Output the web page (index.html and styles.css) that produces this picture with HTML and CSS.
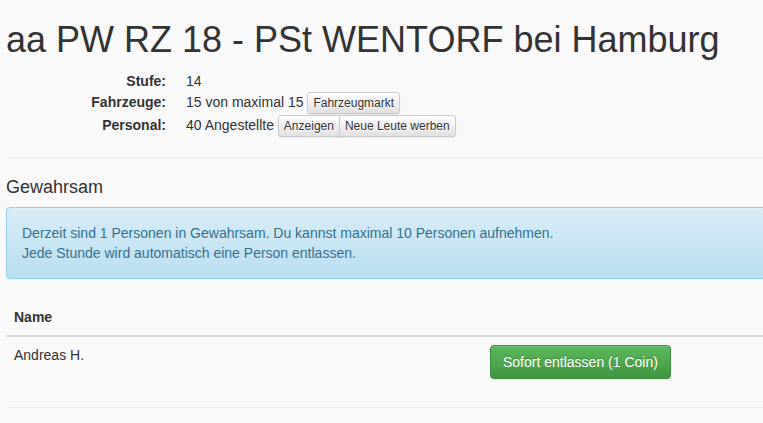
FILE: index.html
```html
<!DOCTYPE html>
<html lang="de">
<head>
<meta charset="utf-8">
<title>aa PW RZ 18 - PSt WENTORF bei Hamburg</title>
<link rel="stylesheet" href="styles.css">
</head>
<body>
<div class="page">
  <h1 class="title">aa PW RZ 18 - PSt WENTORF bei Hamburg</h1>
  <dl class="info">
    <dt>Stufe:</dt>
    <dd>14</dd>
    <dt class="tall">Fahrzeuge:</dt>
    <dd class="tall">15 von maximal 15 <a class="btn btn-xs">Fahrzeugmarkt</a></dd>
    <dt class="tall">Personal:</dt>
    <dd class="tall">40 Angestellte <span class="btn-group"><a class="btn btn-xs">Anzeigen</a><a class="btn btn-xs">Neue Leute werben</a></span></dd>
  </dl>
  <hr class="rule">
  <h4 class="section-title">Gewahrsam</h4>
  <div class="alert-info">
    Derzeit sind 1 Personen in Gewahrsam. Du kannst maximal 10 Personen aufnehmen.<br>
    Jede Stunde wird automatisch eine Person entlassen.
  </div>
  <table class="table">
    <thead>
      <tr><th class="col-name">Name</th><th></th></tr>
    </thead>
    <tbody>
      <tr>
        <td>Andreas H.</td>
        <td><a class="btn btn-success">Sofort entlassen (1 Coin)</a></td>
      </tr>
    </tbody>
  </table>
  <hr class="rule">
</div>
</body>
</html>
```

FILE: styles.css
```css
html, body {
  margin: 0;
  padding: 0;
  overflow: hidden;
}
body {
  background: #f9f9f9;
  color: #333;
  font-family: "Liberation Sans", Arial, Helvetica, sans-serif;
  font-size: 14px;
  line-height: 20px;
}
.page {
  width: 1000px;
  padding: 0 6px;
}
.title {
  font-size: 36px;
  font-weight: normal;
  line-height: 1.1;
  margin: 20px 0 11px;
}
.info {
  margin: 0 0 20px;
}
.info dt {
  float: left;
  clear: left;
  width: 160px;
  text-align: right;
  font-weight: bold;
}
.info dd {
  margin: 0 0 0 180px;
}
.info .tall {
  line-height: 22px;
}
.btn {
  display: inline-block;
  box-sizing: border-box;
  cursor: pointer;
  text-align: center;
  vertical-align: middle;
  white-space: nowrap;
  border: 1px solid #ccc;
  border-radius: 4px;
  color: #333;
  text-decoration: none;
  padding: 6px 12px;
  font-size: 14px;
  line-height: 20px;
}
.btn-xs {
  padding: 1px 5px;
  font-size: 12px;
  line-height: 18px;
  border-radius: 3px;
  background-image: linear-gradient(to bottom, #fff 0, #e0e0e0 100%);
  border-color: #ccc;
  text-shadow: 0 1px 0 #fff;
  box-shadow: inset 0 1px 0 rgba(255,255,255,.15), 0 1px 1px rgba(0,0,0,.075);
}
.btn-group {
  display: inline-flex;
  vertical-align: middle;
}
.btn-group .btn:first-child {
  border-top-right-radius: 0;
  border-bottom-right-radius: 0;
}
.btn-group .btn + .btn {
  margin-left: -1px;
  border-top-left-radius: 0;
  border-bottom-left-radius: 0;
}
.rule {
  margin: 20px 0;
  border: 0;
  border-top: 1px solid #eee;
}
.section-title {
  font-size: 18px;
  font-weight: normal;
  line-height: 1.1;
  margin: 10px 0 9px;
}
.alert-info {
  padding: 15px;
  margin-bottom: 20px;
  border: 1px solid #9acfea;
  border-radius: 4px;
  color: #31708f;
  background-image: linear-gradient(to bottom, #d9edf7 0, #b9def0 100%);
  text-shadow: 0 1px 0 rgba(255,255,255,.2);
  box-shadow: inset 0 1px 0 rgba(255,255,255,.25), 0 1px 2px rgba(0,0,0,.05);
}
.table {
  width: 100%;
  border-collapse: collapse;
  border-spacing: 0;
  margin-bottom: 20px;
}
.table th,
.table td {
  padding: 8px;
  text-align: left;
  vertical-align: top;
  line-height: 20px;
}
.table th {
  font-weight: bold;
  border-bottom: 2px solid #ddd;
}
.col-name {
  width: 460px;
}
.btn-success {
  color: #fff;
  border-color: #3e8f3e;
  background-image: linear-gradient(to bottom, #5cb85c 0, #419641 100%);
  text-shadow: 0 -1px 0 rgba(0,0,0,.2);
  box-shadow: inset 0 1px 0 rgba(255,255,255,.15), 0 1px 1px rgba(0,0,0,.075);
}
```
